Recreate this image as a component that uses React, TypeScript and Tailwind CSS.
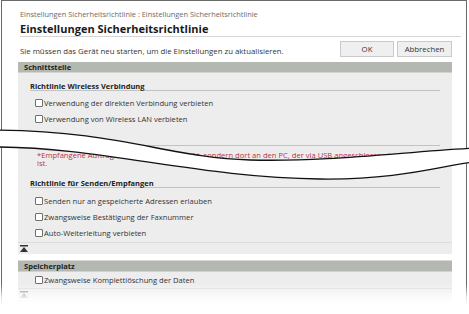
import React from "react";

function Box() {
  return <span className="w-[8px] h-[8px] shrink-0 border border-[#6f6f6f] bg-white rounded-[1px]" />;
}

function Check({ label }: { label: string }) {
  return (
    <div className="flex items-center h-[16px] pl-[5px] gap-[1px] leading-[10px] text-[7.6px]">
      <Box />
      <span>{label}</span>
    </div>
  );
}

function TopIcon({ className }: { className: string }) {
  return (
    <svg width="8" height="7" viewBox="0 0 8 7" className={className}>
      <rect x="0" y="0" width="8" height="1.5" fill="currentColor" />
      <polygon points="4,2 8,7 0,7" fill="currentColor" />
    </svg>
  );
}

function Heading({ children }: { children: React.ReactNode }) {
  return (
    <div className="mx-[12px] leading-[8px] text-[7.5px] font-bold text-[#222] border-b border-[#c2c2c2]">{children}</div>
  );
}

export default function App() {
  return (
    <div
      className="relative w-[469px] h-[314px] overflow-hidden bg-white text-[7.8px] text-[#333]"
      style={{ fontFamily: '"Open Sans", "Noto Sans", sans-serif' }}
    >
      <div className="ml-[1px] w-[466px] h-full border-l border-r border-t border-[#6a6a6a] pl-[16px] pr-[14px]">
        {/* breadcrumb + title */}
        <div className="pl-[2px] mt-[8px] leading-[10px] text-[7.4px] text-[#6b6b6b]">
          Einstellungen Sicherheitsrichtlinie : Einstellungen Sicherheitsrichtlinie
        </div>
        <div className="pl-[2px] mt-[3px] text-[11px] leading-[14px] font-bold text-[#1a1a1a]">
          Einstellungen Sicherheitsrichtlinie
        </div>
        <div className="ml-[2px] mr-[-9px] h-px bg-[#d6d6d6]" />

        {/* restart notice + buttons */}
        <div className="flex items-start pl-[2px] pt-[4px]">
          <span className="mt-[5px] leading-[10px]">
            Sie müssen das Gerät neu starten, um die Einstellungen zu aktualisieren.
          </span>
          <div className="ml-auto flex gap-[3px]">
            <button className="w-[54px] h-[16px] bg-[#efefef] border border-[#cacaca] text-[7.8px] text-[#333] leading-[10px]">
              OK
            </button>
            <button className="w-[55px] h-[16px] bg-[#efefef] border border-[#cacaca] text-[7.8px] text-[#333] leading-[10px]">
              Abbrechen
            </button>
          </div>
        </div>

        {/* Schnittstelle */}
        <div className="mt-[5px] h-[11px] bg-[#b3b8b1] border-b border-[#cfd2ce] pl-[6px] leading-[10px] text-[7.5px] font-bold text-[#222]">
          Schnittstelle
        </div>
        <div className="bg-[#ededed] pt-[9px]">
          <Heading>Richtlinie Wireless Verbindung</Heading>
          <div className="mt-[4px] ml-[12px]">
            <Check label="Verwendung der direkten Verbindung verbieten" />
            <Check label="Verwendung von Wireless LAN verbieten" />
          </div>

          <div className="mt-[18px] mx-[12px] h-px bg-[#c2c2c2]" />
          <div className="mt-[5px] ml-[19px] mr-[14px] leading-[8px] text-[7.6px] text-[#c2303e] whitespace-nowrap overflow-hidden">
            <div>*Empfangene Aufträge werden nicht gedruckt, sondern dort an den PC, der via USB angeschlossen ist, weitergeleitet, wenn diese Option aktiviert</div>
            <div>ist.</div>
          </div>

          <div className="mt-[12px]">
            <Heading>Richtlinie für Senden/Empfangen</Heading>
          </div>
          <div className="mt-[5px] ml-[12px]">
            <Check label="Senden nur an gespeicherte Adressen erlauben" />
            <Check label="Zwangsweise Bestätigung der Faxnummer" />
            <Check label="Auto-Weiterleitung verbieten" />
          </div>
          <div className="mt-[1px] border-t border-[#dcdcdc] pl-[2px] pt-[2px] pb-[2px] leading-none">
            <TopIcon className="text-[#333]" />
          </div>
        </div>

        {/* Speicherplatz */}
        <div className="mt-[6px] border-t border-[#d9d9d9] h-[12px] bg-[#b3b8b1] border-b border-b-[#cfd2ce] pl-[6px] leading-[10px] text-[7.5px] font-bold text-[#222]">
          Speicherplatz
        </div>
        <div className="bg-[#ededed]">
          <div className="ml-[12px]">
            <Check label="Zwangsweise Komplettlöschung der Daten" />
          </div>
          <div className="border-t border-[#dcdcdc] pl-[2px] pt-[2px] pb-[4px] leading-none">
            <TopIcon className="text-[#888]" />
          </div>
        </div>
      </div>

      {/* bottom fade */}
      <div className="absolute left-0 right-0 top-[284px] h-[30px] bg-[linear-gradient(to_bottom,rgba(255,255,255,0)_0%,rgba(255,255,255,0.8)_45%,#fff_75%)]" />

      {/* torn break */}
      <svg className="absolute left-0 top-0 pointer-events-none" width="469" height="314" viewBox="0 0 469 314">
        <path
          d="M-5,130 C120,131 170,158 250,160 C330,162 400,152 474,148 L474,162 C440,166 400,180 320,179 C200,178 100,147 -5,147 Z"
          fill="#fff"
        />
        <path d="M-5,130 C120,131 170,158 250,160 C330,162 400,152 474,148" fill="none" stroke="#111" strokeWidth="1.3" />
        <path d="M-5,147 C100,147 200,178 320,179 C400,180 440,166 474,162" fill="none" stroke="#111" strokeWidth="1.3" />
      </svg>
    </div>
  );
}
